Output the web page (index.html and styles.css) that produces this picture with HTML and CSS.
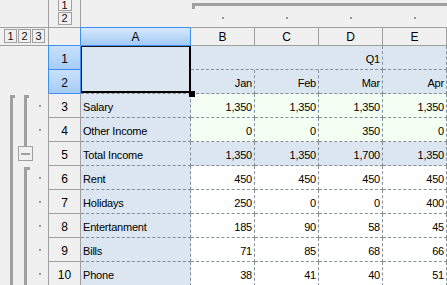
FILE: index.html
```html
<!DOCTYPE html>
<html>
<head>
<meta charset="utf-8">
<link rel="stylesheet" href="styles.css">
</head>
<body>
<div class="sheet">
  <div class="c tl"></div>
  <div class="c col-levels"><span class="lvl">1</span><span class="lvl">2</span></div>
  <div class="col-outline">
    <div class="col-bar"></div>
    <span class="cdot b"></span><span class="cdot c2"></span><span class="cdot d2"></span><span class="cdot e"></span>
  </div>

  <div class="c row-levels"><span class="lvl">1</span><span class="lvl">2</span><span class="lvl">3</span></div>
  <div class="c hc"></div>
  <div class="c ch sel">A</div>
  <div class="c ch">B</div>
  <div class="c ch">C</div>
  <div class="c ch">D</div>
  <div class="c ch">E</div>

  <div class="row-outline">
    <div class="ol1"></div>
    <div class="ol2a"></div>
    <div class="minus"><span></span></div>
    <div class="ol2b"></div>
    <div class="dots">
      <span class="slot"></span><span class="slot"></span>
      <span class="slot"><i></i></span><span class="slot"><i></i></span>
      <span class="slot"></span>
      <span class="slot"><i></i></span><span class="slot"><i></i></span><span class="slot"><i></i></span><span class="slot"><i></i></span><span class="slot"><i></i></span>
    </div>
  </div>

  <div class="c rh sel">1</div>
  <div class="d lbl hd a12"></div>
  <div class="d hd q1">Q1</div>
  <div class="d hd"></div>

  <div class="c rh sel">2</div>
  <div class="d hd">Jan</div>
  <div class="d hd">Feb</div>
  <div class="d hd">Mar</div>
  <div class="d hd">Apr</div>

  <div class="c rh">3</div>
  <div class="d lbl">Salary</div>
  <div class="d gr">1,350</div>
  <div class="d gr">1,350</div>
  <div class="d gr">1,350</div>
  <div class="d gr">1,350</div>

  <div class="c rh">4</div>
  <div class="d lbl">Other Income</div>
  <div class="d gr">0</div>
  <div class="d gr">0</div>
  <div class="d gr">350</div>
  <div class="d gr">0</div>

  <div class="c rh">5</div>
  <div class="d lbl">Total Income</div>
  <div class="d hd">1,350</div>
  <div class="d hd">1,350</div>
  <div class="d hd">1,700</div>
  <div class="d hd">1,350</div>

  <div class="c rh">6</div>
  <div class="d lbl">Rent</div>
  <div class="d wh">450</div>
  <div class="d wh">450</div>
  <div class="d wh">450</div>
  <div class="d wh">450</div>

  <div class="c rh">7</div>
  <div class="d lbl">Holidays</div>
  <div class="d wh">250</div>
  <div class="d wh">0</div>
  <div class="d wh">0</div>
  <div class="d wh">400</div>

  <div class="c rh">8</div>
  <div class="d lbl">Entertanment</div>
  <div class="d wh">185</div>
  <div class="d wh">90</div>
  <div class="d wh">58</div>
  <div class="d wh">45</div>

  <div class="c rh">9</div>
  <div class="d lbl">Bills</div>
  <div class="d wh">71</div>
  <div class="d wh">85</div>
  <div class="d wh">68</div>
  <div class="d wh">66</div>

  <div class="c rh">10</div>
  <div class="d lbl">Phone</div>
  <div class="d wh">38</div>
  <div class="d wh">41</div>
  <div class="d wh">40</div>
  <div class="d wh">51</div>
</div>
</body>
</html>
```

FILE: styles.css
```css
html, body {
  margin: 0;
  padding: 0;
  background: #f0f0f0;
}

.sheet {
  display: grid;
  grid-template-columns: 49px 32px 110px 64px 64px 64px 64px;
  grid-template-rows: 28px 18px repeat(10, 24px);
  width: 447px;
  height: 285px;
  overflow: hidden;
  background: #f0f0f0;
  font-family: "Liberation Sans", Arial, sans-serif;
  color: #000;
}

.c {
  box-sizing: border-box;
  border-right: 1px solid #a0a0a0;
  border-bottom: 1px solid #a0a0a0;
}

/* level buttons */
.lvl {
  box-sizing: border-box;
  display: flex;
  align-items: center;
  justify-content: center;
  border: 1px solid #a0a0a0;
  font-size: 11px;
  line-height: 11px;
  color: #111;
  background: #f0f0f0;
}

.col-levels {
  display: flex;
  flex-direction: column;
  align-items: center;
  justify-content: flex-end;
  gap: 1px;
  padding-bottom: 2px;
  overflow: hidden;
}
.col-levels .lvl {
  width: 14px;
  height: 13px;
  flex: none;
}
.col-levels .lvl:first-child {
  height: 11px;
  border-top: 0;
  line-height: 10px;
}

.row-levels {
  display: flex;
  gap: 1px;
  padding: 1px 0 0 4px;
}
.row-levels .lvl {
  width: 13px;
  height: 14px;
}

/* column outline */
.col-outline {
  grid-column: 3 / span 5;
  box-sizing: border-box;
  border-bottom: 1px solid #a0a0a0;
  display: grid;
  grid-template-columns: 110px repeat(4, 64px);
  grid-template-rows: 1fr;
}
.col-bar {
  grid-column: 2 / -1;
  grid-row: 1;
  align-self: start;
  box-sizing: border-box;
  margin: 3px 0 0 1px;
  height: 6px;
  border-top: 3px solid #a0a0a0;
  border-left: 3px solid #a0a0a0;
}
.cdot {
  grid-row: 1;
  align-self: start;
  justify-self: center;
  width: 2px;
  height: 2px;
  margin-top: 17px;
  background: #9a9a9a;
}
.cdot.b { grid-column: 2; }
.cdot.c2 { grid-column: 3; }
.cdot.d2 { grid-column: 4; }
.cdot.e { grid-column: 5; }

/* headers */
.ch {
  display: flex;
  align-items: center;
  justify-content: center;
  font-size: 12px;
  padding-top: 1px;
}
.rh {
  display: flex;
  align-items: center;
  justify-content: center;
  font-size: 12px;
  padding-top: 2px;
}
.ch.sel {
  position: relative;
  z-index: 1;
  background: linear-gradient(#d6e8fd, #a3cbf6);
  border-right-color: #3d8ff0;
  border-bottom-color: #3d8ff0;
  box-shadow: -1px -1px 0 #3d8ff0;
}
.rh.sel {
  position: relative;
  z-index: 1;
  background: linear-gradient(#c8e0fc, #a6cdf7);
  border-right-color: #3d8ff0;
  border-bottom-color: #3d8ff0;
  box-shadow: -1px -1px 0 #3d8ff0;
}

/* row outline */
.row-outline {
  grid-column: 1;
  grid-row: 3 / span 10;
  box-sizing: border-box;
  border-right: 1px solid #a0a0a0;
  display: grid;
  grid-template-columns: 17px 17px 14px;
  grid-template-rows: repeat(10, 24px);
}
.ol1 {
  grid-column: 1;
  grid-row: 3 / -1;
  box-sizing: border-box;
  margin: 1px 0 0 10px;
  width: 5px;
  border-left: 3px solid #a0a0a0;
  border-top: 3px solid #a0a0a0;
}
.ol2a {
  grid-column: 2;
  grid-row: 3 / span 2;
  align-self: start;
  box-sizing: border-box;
  margin: 1px 0 0 7px;
  width: 5px;
  height: 51px;
  border-left: 3px solid #a0a0a0;
  border-top: 3px solid #a0a0a0;
}
.minus {
  grid-column: 2;
  grid-row: 5;
  align-self: start;
  box-sizing: border-box;
  margin: 4px 0 0 1px;
  width: 15px;
  height: 15px;
  border: 1px solid #a0a0a0;
  display: flex;
  align-items: center;
  justify-content: center;
}
.minus span {
  width: 9px;
  height: 2px;
  background: #a0a0a0;
}
.ol2b {
  grid-column: 2;
  grid-row: 6 / -1;
  box-sizing: border-box;
  margin: 1px 0 0 7px;
  width: 6px;
  border-left: 3px solid #a0a0a0;
  border-top: 3px solid #a0a0a0;
}
.dots {
  grid-column: 3;
  grid-row: 1 / -1;
  display: flex;
  flex-direction: column;
}
.slot {
  height: 24px;
  flex: none;
  display: flex;
  align-items: center;
  padding-left: 5px;
}
.slot i {
  display: block;
  width: 2px;
  height: 2px;
  background: #a0a0a0;
}

/* cells */
.d {
  box-sizing: border-box;
  border-right: 1px dashed #858e98;
  border-bottom: 1px dashed #858e98;
  display: flex;
  align-items: flex-end;
  justify-content: flex-end;
  padding: 0 2px 3px 2px;
  font-size: 11px;
  line-height: 13px;
  letter-spacing: -0.2px;
  white-space: nowrap;
  overflow: hidden;
  background: #dce6f1;
}
.d.lbl {
  justify-content: flex-start;
  background: #dce6f1;
}
.d.hd { background: #dce6f1; }
.d.gr { background: #f3fff3; }
.d.wh { background: #ffffff; }

.q1 {
  grid-column: span 3;
}

.a12 {
  grid-row: span 2;
  position: relative;
  overflow: visible;
  z-index: 2;
}
.a12::before {
  content: "";
  position: absolute;
  left: 0;
  top: 0;
  right: -1px;
  bottom: 0;
  border-left: 1px solid #1a1a2a;
  border-top: 1px solid #1a1a2a;
  border-right: 2px solid #000;
  border-bottom: 2px solid #000;
}
.a12::after {
  content: "";
  position: absolute;
  right: -5px;
  bottom: -4px;
  width: 6px;
  height: 6px;
  background: #000;
}
```
